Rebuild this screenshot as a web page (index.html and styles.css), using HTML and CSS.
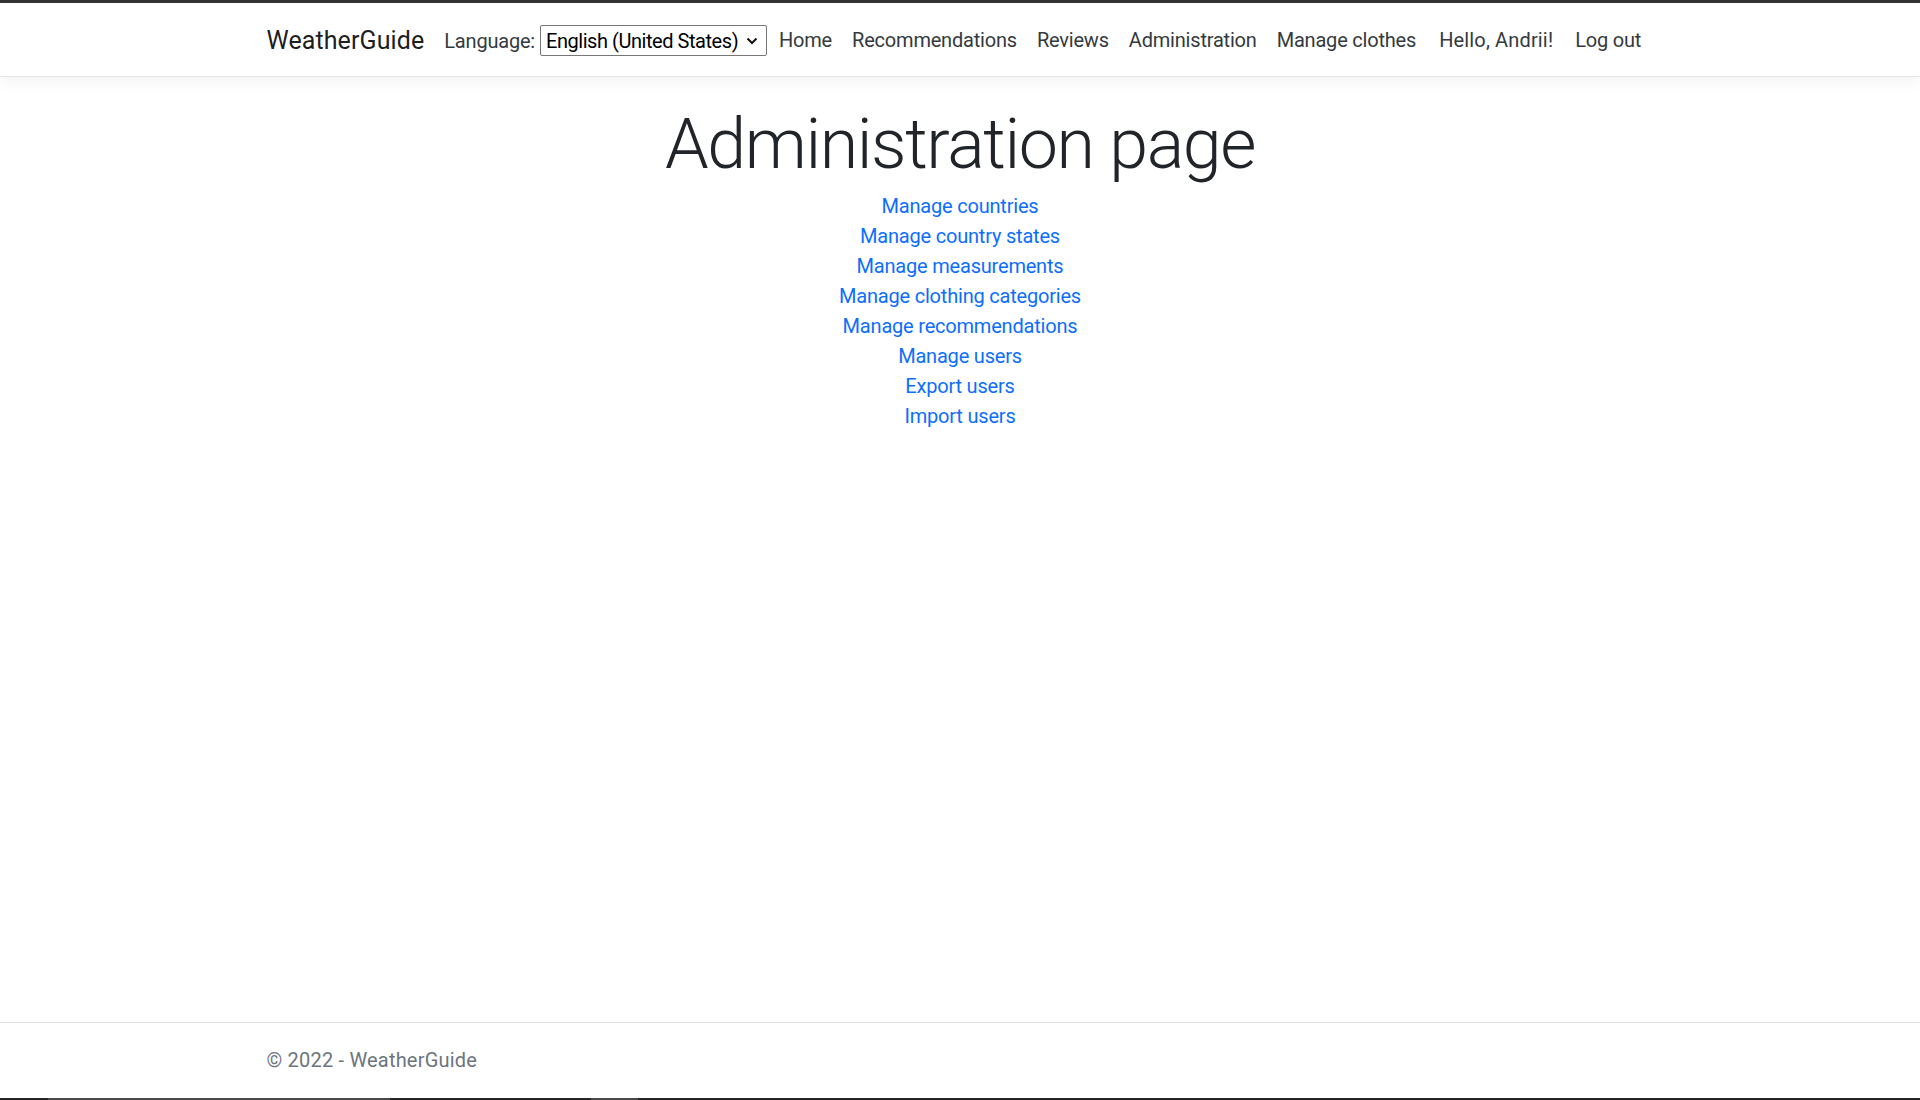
FILE: index.html
```html
<!DOCTYPE html>
<html lang="en">
<head>
<meta charset="utf-8">
<title>Administration page - WeatherGuide</title>
<link rel="stylesheet" href="styles.css">
</head>
<body>
<div class="top-strip"></div>
<header class="navbar">
  <div class="container nav-inner">
    <a class="brand" href="#">WeatherGuide</a>
    <form class="lang-form">
      <label class="lang-label" for="lang">Language:</label>
      <span class="select-wrap">
        <select id="lang" class="lang-select">
          <option>English (United States)</option>
        </select>
        <svg class="chevron" width="12" height="8" viewBox="0 0 12 8" aria-hidden="true"><path d="M1.5 1.5 L6 6 L10.5 1.5" fill="none" stroke="#111" stroke-width="2"/></svg>
      </span>
    </form>
    <ul class="nav-list">
      <li><a class="nav-link" href="#">Home</a></li>
      <li><a class="nav-link" href="#">Recommendations</a></li>
      <li><a class="nav-link" href="#">Reviews</a></li>
      <li><a class="nav-link" href="#">Administration</a></li>
      <li><a class="nav-link" href="#">Manage clothes</a></li>
    </ul>
    <ul class="nav-list user-list">
      <li><a class="nav-link greeting" href="#">Hello, Andrii!</a></li>
      <li><a class="nav-link" href="#">Log out</a></li>
    </ul>
  </div>
</header>
<main class="main">
  <div class="container center">
    <h1 class="display">Administration page</h1>
    <div class="admin-links">
      <a href="#">Manage countries</a>
      <a href="#">Manage country states</a>
      <a href="#">Manage measurements</a>
      <a href="#">Manage clothing categories</a>
      <a href="#">Manage recommendations</a>
      <a href="#">Manage users</a>
      <a href="#">Export users</a>
      <a href="#">Import users</a>
    </div>
  </div>
</main>
<footer class="footer">
  <div class="container">© 2022 - WeatherGuide</div>
</footer>
<div class="bottom-strip">
  <span class="seg seg-a"></span>
  <span class="seg seg-b"></span>
</div>
</body>
</html>
```

FILE: styles.css
```css
* { box-sizing: border-box; }

html, body {
  margin: 0;
  padding: 0;
}

body {
  min-height: 1100px;
  display: flex;
  flex-direction: column;
  font-family: "Segoe UI", Roboto, "Liberation Sans", sans-serif;
  font-size: 20px;
  line-height: 30px;
  letter-spacing: -0.2px;
  color: #212529;
  background: #fff;
}

a { text-decoration: none; }

.container {
  width: 1425px;
  margin: 0 auto;
  padding: 0 19px;
}

.top-strip {
  height: 3px;
  background: #353535;
  flex: none;
}

.navbar {
  flex: none;
  height: 74px;
  border-bottom: 1px solid #e5e5e5;
  background: #fff;
  box-shadow: 0 5px 15px rgba(0, 0, 0, 0.05);
  position: relative;
  z-index: 1;
}

.nav-inner {
  height: 73px;
  display: flex;
  align-items: center;
  white-space: nowrap;
}

.nav-inner > * {
  flex: none;
}

.brand {
  font-size: 25px;
  line-height: 37px;
  letter-spacing: 0.1px;
  color: rgba(0, 0, 0, 0.9);
  margin-right: 20px;
  padding-top: 1px;
}

.lang-form {
  display: flex;
  align-items: center;
  margin-right: 2px;
  padding-top: 2px;
}

.lang-label {
  color: #343a40;
  margin-right: 5px;
}

.select-wrap {
  position: relative;
  display: inline-block;
}

.lang-select {
  appearance: none;
  -webkit-appearance: none;
  width: 227px;
  height: 31px;
  border: 1px solid #767676;
  border-radius: 2px;
  background: #fff;
  font-family: inherit;
  font-size: 20px;
  letter-spacing: -0.45px;
  line-height: 28px;
  color: #000;
  padding: 0 0 0 5px;
  margin: 0;
}

.chevron {
  position: absolute;
  right: 9px;
  top: 12px;
  pointer-events: none;
}

.nav-list {
  list-style: none;
  margin: 0;
  padding: 0;
  display: flex;
}

.nav-link {
  display: block;
  padding: 10px 10px;
  color: #343a40;
}

.greeting {
  letter-spacing: 0.15px;
}

.user-list {
  margin-left: 3px;
}

.user-list li + li {
  margin-left: 2px;
}

.main {
  flex: 1;
  padding-top: 25px;
}

.center { text-align: center; }

.display {
  font-size: 70px;
  font-weight: 300;
  line-height: 84px;
  letter-spacing: -1.4px;
  margin: 0 0 5px;
  color: #212529;
}

.admin-links {
  display: flex;
  flex-direction: column;
  align-items: center;
}

.admin-links a {
  color: #0d6efd;
  line-height: 30px;
}

.footer {
  flex: none;
  height: 76px;
  border-top: 1px solid #dee2e6;
  line-height: 75px;
  letter-spacing: 0.2px;
  color: #6c757d;
  white-space: nowrap;
}

.bottom-strip {
  flex: none;
  height: 2px;
  background: #262626;
  position: relative;
}

.seg {
  position: absolute;
  top: 0;
  height: 2px;
  background: #4a4a4a;
}

.seg-a { left: 48px; width: 342px; }
.seg-b { left: 591px; width: 47px; }
```
